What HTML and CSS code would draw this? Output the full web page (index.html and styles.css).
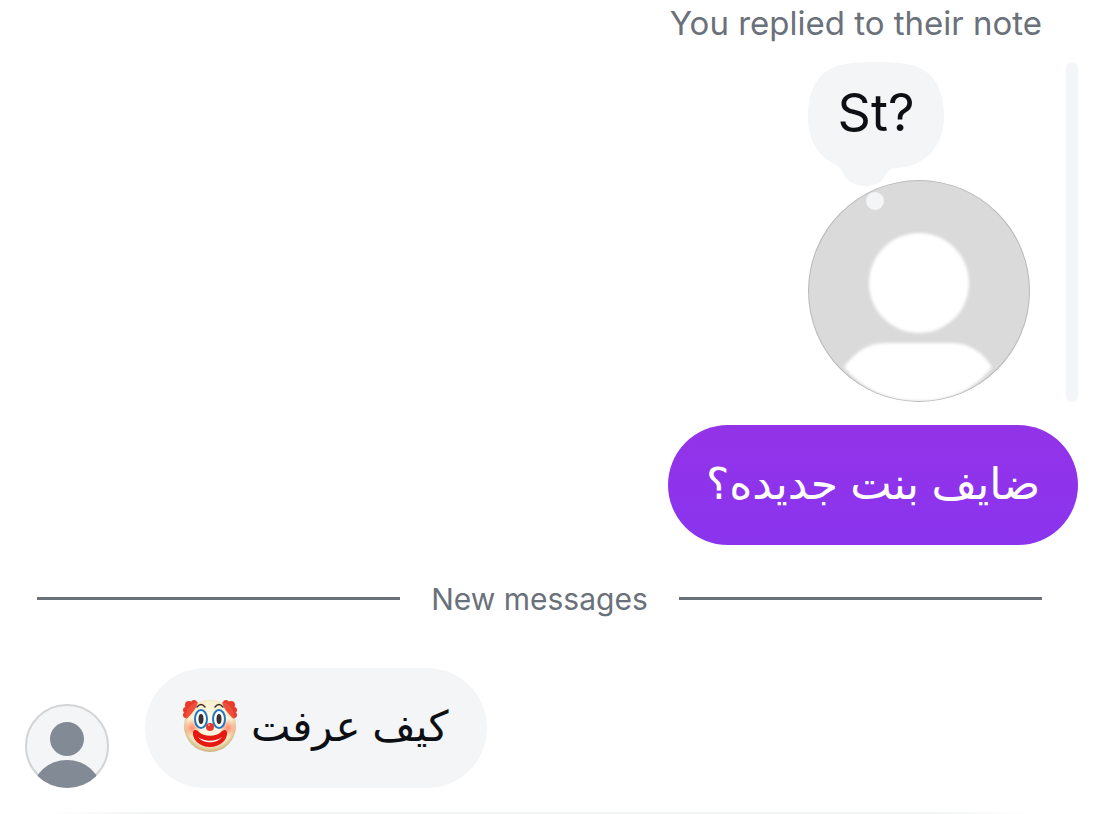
FILE: index.html
```html
<!DOCTYPE html>
<html lang="en">
<head>
    <meta charset="UTF-8">
    <title>Messages</title>
    <link rel="stylesheet" href="styles.css">
</head>
<body>
<main class="chat">
    <p class="reply-label">You replied to their note</p>
    <div class="reply">
        <div class="note">
            <div class="note-bubble">
                <svg class="note-shape" viewBox="0 0 136 124" aria-hidden="true">
                    <path d="M68 0C94 0 110 2 121 12C132 22 136 37 136 54C136 84 117 105 88 106C82 106 79 109 77 114C73 121 66 124 57 124C47 124 38 119 35 111C33 107 31 104 26 102C8 92 0 77 0 54C0 37 4 22 15 12C26 2 42 0 68 0Z" fill="#f3f5f7"/>
                </svg>
                <p class="note-text">St?</p>
            </div>
            <div class="note-avatar">
                <svg viewBox="0 0 222 222" role="img" aria-label="Profile photo">
                    <defs>
                        <clipPath id="noteClip"><circle cx="111" cy="111" r="110"/></clipPath>
                        <filter id="soft"><feGaussianBlur stdDeviation="1.5"/></filter>
                    </defs>
                    <circle cx="111" cy="111" r="111" fill="#b9b9b9"/>
                    <g clip-path="url(#noteClip)">
                        <rect width="222" height="222" fill="#dadada"/>
                        <g fill="#fff" filter="url(#soft)">
                            <circle cx="111" cy="103" r="50"/>
                            <path d="M36 187C48 171 60 163 78 163H144C162 163 175 173 184 187C166 210 142 221 111 221C80 221 55 210 36 187Z"/>
                        </g>
                    </g>
                </svg>
                <span class="note-dot"></span>
            </div>
        </div>
        <div class="reply-bar"></div>
    </div>
    <p class="message sent" lang="ar" dir="rtl">ضايف بنت جديده؟</p>

    <div class="divider"><span>New messages</span></div>

    <div class="received-row">
        <svg class="avatar" viewBox="0 0 84 84" role="img" aria-label="Profile photo">
            <defs>
                <clipPath id="avatarClip"><circle cx="42" cy="42" r="42"/></clipPath>
            </defs>
            <circle cx="42" cy="42" r="41" fill="#f3f5f7" stroke="#d3d4d6" stroke-width="2"/>
            <g fill="#828a96" clip-path="url(#avatarClip)">
                <circle cx="42" cy="35" r="17"/>
                <ellipse cx="42" cy="87" rx="34" ry="31"/>
            </g>
        </svg>
        <p class="message received" lang="ar" dir="rtl">
            <span>كيف عرفت</span>
            <svg class="emoji" viewBox="0 0 54 54" role="img" aria-label="Clown face">
                <defs>
                    <radialGradient id="face" cx="50%" cy="45%" r="56%">
                        <stop offset="0" stop-color="#fffdf0"/>
                        <stop offset="0.75" stop-color="#fbf0cf"/>
                        <stop offset="1" stop-color="#c9ad72"/>
                    </radialGradient>
                    <radialGradient id="cheek">
                        <stop offset="0" stop-color="#ff8a6b"/>
                        <stop offset="1" stop-color="#ff8a6b" stop-opacity="0"/>
                    </radialGradient>
                </defs>
                <circle cx="27" cy="27" r="26" fill="url(#face)"/>
                <g fill="#e93a2c">
                    <circle cx="6" cy="6" r="4"/><circle cx="11" cy="4" r="3"/><circle cx="3" cy="11" r="3"/><circle cx="3" cy="16" r="3"/>
                    <circle cx="48" cy="6" r="4"/><circle cx="43" cy="4" r="3"/><circle cx="51" cy="11" r="3"/><circle cx="51" cy="16" r="3"/>
                </g>
                <path d="M3 20C2 12 7 4 15 3C13 10 9 15 3 20ZM51 20C52 12 47 4 39 3C41 10 45 15 51 20Z" fill="#ee4f3b"/>
                <circle cx="9" cy="29" r="9" fill="url(#cheek)"/>
                <circle cx="45" cy="29" r="9" fill="url(#cheek)"/>
                <g fill="#fff" stroke="#2377bd" stroke-width="2">
                    <ellipse cx="18" cy="20" rx="6" ry="9"/>
                    <ellipse cx="36" cy="20" rx="6" ry="9"/>
                </g>
                <ellipse cx="18" cy="20" rx="2.5" ry="5" fill="#37312f"/>
                <ellipse cx="36" cy="20" rx="2.5" ry="5" fill="#37312f"/>
                <path d="M14 8Q18 3 22 8M32 8Q36 3 40 8" fill="none" stroke="#3b2c26" stroke-width="1.5" stroke-linecap="round"/>
                <path d="M10 33C11 30 14 31 16 33C21 38 33 38 38 33C40 31 43 30 44 33C45 41 37 48 27 48C17 48 9 41 10 33Z" fill="#e5190f"/>
                <path d="M15 38C22 43 32 43 39 38C34 45 20 45 15 38Z" fill="#fff"/>
                <circle cx="27" cy="28" r="4" fill="#e8382d"/>
                <circle cx="26" cy="26" r="1" fill="#ff9a88"/>
            </svg>
        </p>
    </div>
    <div class="bottom-line"></div>
</main>
</body>
</html>
```

FILE: styles.css
```css
* {
    box-sizing: border-box;
    margin: 0;
    padding: 0;
}

body {
    background: #fff;
    color: #0c1014;
    font-family: Inter, "DejaVu Sans", sans-serif;
}

.chat {
    display: flex;
    flex-direction: column;
    padding: 3px 23px 0 25px;
}

.reply-label {
    margin-right: 36px;
    color: #6a717a;
    font-size: 33px;
    line-height: 40px;
    text-align: right;
}

.reply {
    display: flex;
    justify-content: flex-end;
    gap: 36px;
    margin-top: 19px;
}

.reply-bar {
    width: 12px;
    border-radius: 6px;
    background: #f3f5f7;
}

.note-bubble {
    position: relative;
    width: 136px;
    height: 118px;
}

/* the tail hangs over the top of the avatar */
.note-shape {
    position: absolute;
    top: 0;
    left: 0;
    z-index: 1;
    width: 136px;
    height: 124px;
}

.note-text {
    position: relative;
    z-index: 2;
    font-size: 52px;
    line-height: 102px;
    text-align: center;
}

.note-avatar {
    position: relative;
    width: 222px;
    height: 222px;
}

.note-avatar svg {
    display: block;
}

.note-dot {
    position: absolute;
    top: 12px;
    left: 58px;
    width: 18px;
    height: 18px;
    border-radius: 50%;
    background: #f3f5f7;
}

.message {
    padding: 28px 38px 32px;
    border-radius: 60px;
    font-size: 44px;
    line-height: 60px;
}

.sent {
    align-self: flex-end;
    margin-top: 23px;
    background: linear-gradient(#9333e8, #8a34ee);
    color: #fff;
}

.divider {
    display: flex;
    align-items: center;
    gap: 31px;
    margin: 32px 36px 0 12px;
    color: #6a717a;
    font-size: 30px;
    line-height: 40px;
}

.divider span {
    padding-top: 2px;
}

.divider::before,
.divider::after {
    content: "";
    flex: 1;
    height: 3px;
    background: #6a717a;
}

.received-row {
    display: flex;
    align-items: flex-end;
    gap: 36px;
    margin-top: 49px;
}

.avatar {
    width: 84px;
    height: 84px;
}

.received {
    display: flex;
    align-items: center;
    gap: 14px;
    background: #f3f5f7;
    font-size: 42px;
}

.emoji {
    width: 54px;
    height: 54px;
}

.bottom-line {
    height: 2px;
    margin: 24px 48px 0 24px;
    background: linear-gradient(90deg, #fff, #f3f4f4 10%, #f3f4f4 90%, #fff);
}
```
